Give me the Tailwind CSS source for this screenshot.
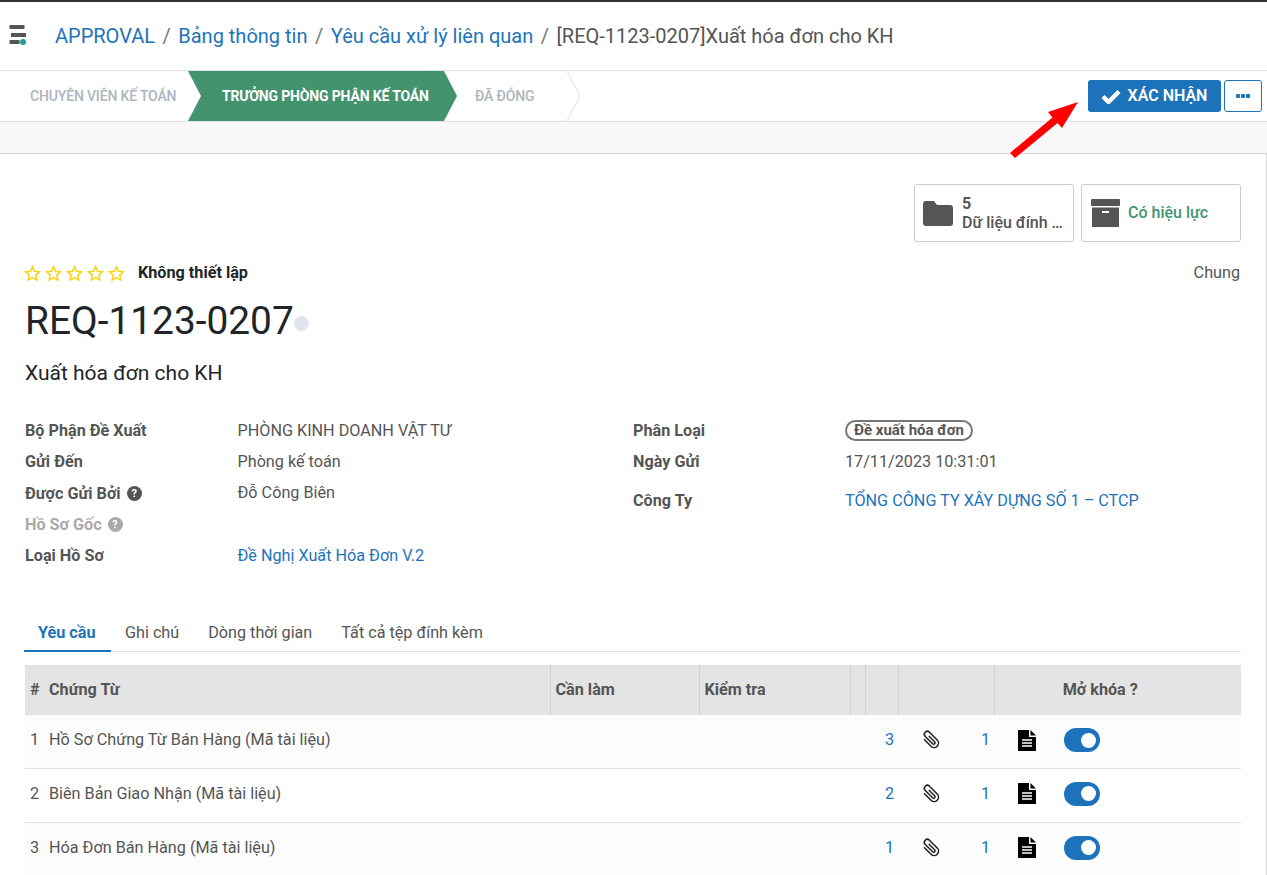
<!doctype html>
<html lang="vi">
<head>
<meta charset="utf-8">
<script src="https://cdn.jsdelivr.net/npm/@tailwindcss/browser@4"></script>
</head>
<body class="font-['Roboto',sans-serif] text-[16.2px] text-[#555] bg-white">
<div class="relative w-[1267px] h-[875px] overflow-hidden">
  <header class="h-[70px] border-t-2 border-[#333] flex items-center bg-white">
    <svg class="ml-[9px] w-[20px] h-[24px] shrink-0 -mt-[2px]" viewBox="0 0 20 24"><rect x="0.5" y="2" width="15" height="4" fill="#555"/><rect x="2" y="10" width="15" height="4" fill="#555"/><rect x="0.5" y="17" width="10" height="4" fill="#555"/><circle cx="14" cy="19" r="3" fill="#1f9e97"/></svg>
    <nav class="ml-[26px] flex items-center text-[20px]">
      <a class="text-[#1d73bb]">APPROVAL</a><span class="mx-[7.5px] text-[#777]">/</span>
      <a class="text-[#1d73bb]">Bảng thông tin</a><span class="mx-[7.5px] text-[#777]">/</span>
      <a class="text-[#1d73bb]">Yêu cầu xử lý liên quan</a><span class="mx-[7.5px] text-[#777]">/</span>
      <span class="text-[#555]">[REQ-1123-0207]Xuất hóa đơn cho KH</span>
    </nav>
  </header>
  <div class="h-[52px] border-y border-[#dee2e6] flex items-center bg-white">
    <div class="w-[188px] h-full flex items-center pl-[30px] text-[14px] font-medium text-[#adb5bd] tracking-[-0.16px] whitespace-nowrap">CHUYÊN VIÊN KẾ TOÁN</div>
    <div class="w-[269px] h-full flex items-center pl-[34px] text-[14px] font-bold text-white bg-[#43936f] tracking-[-0.16px] whitespace-nowrap [clip-path:polygon(0_0,256px_0,269px_50%,256px_100%,0_100%,13px_50%)]">TRƯỞNG PHÒNG PHẬN KẾ TOÁN</div>
    <div class="w-[109px] h-full flex items-center pl-[18px] text-[14px] font-medium text-[#adb5bd] tracking-[-0.16px] whitespace-nowrap">ĐÃ ĐÓNG</div>
    <svg class="w-[15px] h-full shrink-0" viewBox="0 0 15 50" preserveAspectRatio="none"><path d="M1 0 L14 25 L1 50" fill="none" stroke="#dee2e6"/></svg>
    <button class="ml-auto h-[32px] w-[133px] bg-[#1d73bb] text-white rounded-[3px] flex items-center justify-center gap-[7px] text-[16px] font-semibold pr-[1px]">
      <svg class="w-[20px] h-[15px]" viewBox="0 0 20 15"><path d="M2 7.5 L7.5 13 L18 2.5" fill="none" stroke="#fff" stroke-width="4.4"/></svg>XÁC NHẬN</button>
    <button class="ml-[3px] mr-[5px] h-[32px] w-[38px] border border-[#1d73bb] bg-white rounded-[3px] flex items-center justify-center gap-[1px]">
      <span class="w-[4px] h-[4px] bg-[#1d73bb] rounded-[1px]"></span><span class="w-[4px] h-[4px] bg-[#1d73bb] rounded-[1px]"></span><span class="w-[4px] h-[4px] bg-[#1d73bb] rounded-[1px]"></span>
    </button>
  </div>
  <div class="h-[32px] bg-[#f9f9f9] border-b border-[#d8d8d8]"></div>

  <main class="border-r border-[#d8d8d8] h-[722px] pl-[25px] pr-[25px] pt-[30px]">
    <div class="flex justify-end gap-[7px]">
      <div class="w-[160px] h-[58px] border border-[#ccc] rounded-[3px] flex items-center pl-[8px]">
        <svg class="w-[30px] h-[25px] shrink-0" viewBox="0 0 30 25"><path d="M3 0 H11 L14 4 H27 a3 3 0 0 1 3 3 V22 a3 3 0 0 1 -3 3 H3 a3 3 0 0 1 -3 -3 V3 a3 3 0 0 1 3 -3z" fill="#555"/></svg>
        <div class="ml-[9px] leading-[19px] whitespace-nowrap text-[16px]"><div class="font-bold">5</div><div class="font-medium">Dữ liệu đính …</div></div>
      </div>
      <div class="w-[160px] h-[58px] border border-[#ccc] rounded-[3px] flex items-center pl-[9px]">
        <svg class="w-[29px] h-[28px] shrink-0" viewBox="0 0 29 28"><rect width="29" height="7" rx="1" fill="#555"/><path d="M1 8.5 H28 V28 H1z" fill="#555"/><rect x="11" y="12" width="7" height="2" fill="#fff"/></svg>
        <span class="ml-[8px] text-[16px] font-medium text-[#43936f]">Có hiệu lực</span>
      </div>
    </div>

    <div class="flex items-center justify-between mt-[19px] h-[24px] pr-[1px]">
      <div class="flex items-center">
        <div class="flex gap-[4px] -ml-[1px]">
          <svg class="w-[17px] h-[17px]" viewBox="0 0 24 24"><path d="M12 2.5l2.9 6.3 6.9.8-5.1 4.7 1.4 6.8-6.1-3.4-6.1 3.4 1.4-6.8-5.1-4.7 6.9-.8z" fill="none" stroke="#fbd416" stroke-width="2.2"/></svg>
          <svg class="w-[17px] h-[17px]" viewBox="0 0 24 24"><path d="M12 2.5l2.9 6.3 6.9.8-5.1 4.7 1.4 6.8-6.1-3.4-6.1 3.4 1.4-6.8-5.1-4.7 6.9-.8z" fill="none" stroke="#fbd416" stroke-width="2.2"/></svg>
          <svg class="w-[17px] h-[17px]" viewBox="0 0 24 24"><path d="M12 2.5l2.9 6.3 6.9.8-5.1 4.7 1.4 6.8-6.1-3.4-6.1 3.4 1.4-6.8-5.1-4.7 6.9-.8z" fill="none" stroke="#fbd416" stroke-width="2.2"/></svg>
          <svg class="w-[17px] h-[17px]" viewBox="0 0 24 24"><path d="M12 2.5l2.9 6.3 6.9.8-5.1 4.7 1.4 6.8-6.1-3.4-6.1 3.4 1.4-6.8-5.1-4.7 6.9-.8z" fill="none" stroke="#fbd416" stroke-width="2.2"/></svg>
          <svg class="w-[17px] h-[17px]" viewBox="0 0 24 24"><path d="M12 2.5l2.9 6.3 6.9.8-5.1 4.7 1.4 6.8-6.1-3.4-6.1 3.4 1.4-6.8-5.1-4.7 6.9-.8z" fill="none" stroke="#fbd416" stroke-width="2.2"/></svg>
        </div>
        <span class="ml-[13px] font-bold text-[#212529]">Không thiết lập</span>
      </div>
      <span>Chung</span>
    </div>

    <div class="flex items-center h-[44px] mt-[14px]">
      <h1 class="text-[38.85px] leading-[44px] text-[#212529]">REQ-1123-0207</h1>
      <span class="w-[15px] h-[15px] rounded-full bg-[#e1e4ea] mt-[4px]"></span>
    </div>
    <p class="text-[21px] leading-[28px] text-[#212529] mt-[16px]">Xuất hóa đơn cho KH</p>

    <div class="flex mt-[28px]">
      <div class="w-[608px] shrink-0">
        <div class="flex h-[31.4px] items-center"><div class="w-[212.5px] font-bold">Bộ Phận Đề Xuất</div><div>PHÒNG KINH DOANH VẬT TƯ</div></div>
        <div class="flex h-[31.4px] items-center"><div class="w-[212.5px] font-bold">Gửi Đến</div><div>Phòng kế toán</div></div>
        <div class="flex h-[31.4px] items-center pt-[1px]"><div class="w-[212.5px] font-bold flex items-center gap-[6px]">Được Gửi Bởi <span class="w-[15px] h-[15px] rounded-full bg-[#555] text-white text-[11px] leading-[15px] text-center">?</span></div><div class="-mt-[1px]">Đỗ Công Biên</div></div>
        <div class="flex h-[31.4px] items-center"><div class="w-[212.5px] font-bold text-[#aaa] flex items-center gap-[6px]">Hồ Sơ Gốc <span class="w-[15px] h-[15px] rounded-full bg-[#aaa] text-white text-[11px] leading-[15px] text-center">?</span></div></div>
        <div class="flex h-[30.4px] items-center"><div class="w-[212.5px] font-bold">Loại Hồ Sơ</div><div class="text-[#1d73bb]">Đề Nghị Xuất Hóa Đơn V.2</div></div>
      </div>
      <div>
        <div class="flex h-[31.3px] items-center"><div class="w-[212px] font-bold">Phân Loại</div><span class="border-2 border-[#777] rounded-full px-[7px] h-[21px] flex items-center text-[15px] font-bold">Đề xuất hóa đơn</span></div>
        <div class="flex h-[31.3px] items-center"><div class="w-[212px] font-bold">Ngày Gửi</div><div>17/11/2023 10:31:01</div></div>
        <div class="flex h-[48px] items-center"><div class="w-[212px] font-bold">Công Ty</div><div class="text-[#1d73bb]">TỔNG CÔNG TY XÂY DỰNG SỐ 1 – CTCP</div></div>
      </div>
    </div>

    <div class="mt-[43.5px] h-[38px] border-b border-[#dee2e6] flex items-stretch whitespace-nowrap -ml-[1px]">
      <div class="w-[87px] pl-[14px] pt-[1px] flex items-center border-b-2 border-[#1d73bb] -mb-[1px] font-bold text-[#1d73bb]">Yêu cầu</div>
      <div class="px-[14px] flex items-center">Ghi chú</div>
      <div class="px-[15px] flex items-center">Dòng thời gian</div>
      <div class="px-[14px] flex items-center">Tất cả tệp đính kèm</div>
    </div>

    <table class="mt-[13px] w-[1216px] table-fixed border-collapse">
      <colgroup><col class="w-[18px]"><col class="w-[507px]"><col class="w-[149px]"><col class="w-[151px]"><col class="w-[15px]"><col class="w-[33px]"><col class="w-[96px]"><col class="w-[247px]"></colgroup>
      <thead>
        <tr class="h-[50px] bg-[#e4e4e4] font-bold text-left">
          <th class="pl-[5px] font-bold">#</th>
          <th class="pl-[6px] font-bold border-r border-[#d2d2d2]">Chứng Từ</th>
          <th class="pl-[5px] font-bold border-r border-[#d2d2d2]">Cần làm</th>
          <th class="pl-[5px] font-bold border-r border-[#d2d2d2]">Kiểm tra</th>
          <th class="border-r border-[#d2d2d2]"></th>
          <th class="border-r border-[#d2d2d2]"></th>
          <th class="border-r border-[#d2d2d2]"></th>
          <th class="font-bold text-center pr-[35px]">Mở khóa ?</th>
        </tr>
      </thead>
      <tbody>
        <tr class="h-[53px] bg-[#fcfcfc] border-b border-[#dee2e6] [&>td]:pb-[3px]">
          <td class="pl-[5px]">1</td><td class="pl-[6px]">Hồ Sơ Chứng Từ Bán Hàng (Mã tài liệu)</td><td></td><td></td><td></td>
          <td class="text-right pr-[4px] text-[#1d73bb]">3</td>
          <td class="pr-[4px]"><div class="flex items-center justify-between pl-[22px]"><svg class="w-[22px] h-[22px]" viewBox="0 0 20 20"><path d="M6 5 V14 a4 4 0 0 0 8 0 V4 a2.7 2.7 0 0 0 -5.4 0 V13.5 a1.3 1.3 0 0 0 2.6 0 V6" fill="none" stroke="#222" stroke-width="1.4" transform="rotate(-45 10 10)"/></svg><span class="text-[#1d73bb]">1</span></div></td>
          <td><div class="flex items-center pl-[23px]"><svg class="w-[20px] h-[21px]" viewBox="0 0 20 21"><path d="M1 0 H12 V7 H19 V21 H1z M13.5 0 L19 5.5 H13.5z" fill="#000"/><path d="M5 10h10M5 13h10M5 16h10" stroke="#fff" stroke-width="1.4"/></svg><span class="ml-[27px] w-[36px] h-[24px] rounded-full bg-[#1d73bb] flex items-center justify-end pr-[4px]"><span class="w-[15px] h-[15px] rounded-full bg-white"></span></span></div></td>
        </tr>
        <tr class="h-[54px] bg-white border-b border-[#dee2e6] [&>td]:pb-[3px]">
          <td class="pl-[5px]">2</td><td class="pl-[6px]">Biên Bản Giao Nhận (Mã tài liệu)</td><td></td><td></td><td></td>
          <td class="text-right pr-[4px] text-[#1d73bb]">2</td>
          <td class="pr-[4px]"><div class="flex items-center justify-between pl-[22px]"><svg class="w-[22px] h-[22px]" viewBox="0 0 20 20"><path d="M6 5 V14 a4 4 0 0 0 8 0 V4 a2.7 2.7 0 0 0 -5.4 0 V13.5 a1.3 1.3 0 0 0 2.6 0 V6" fill="none" stroke="#222" stroke-width="1.4" transform="rotate(-45 10 10)"/></svg><span class="text-[#1d73bb]">1</span></div></td>
          <td><div class="flex items-center pl-[23px]"><svg class="w-[20px] h-[21px]" viewBox="0 0 20 21"><path d="M1 0 H12 V7 H19 V21 H1z M13.5 0 L19 5.5 H13.5z" fill="#000"/><path d="M5 10h10M5 13h10M5 16h10" stroke="#fff" stroke-width="1.4"/></svg><span class="ml-[27px] w-[36px] h-[24px] rounded-full bg-[#1d73bb] flex items-center justify-end pr-[4px]"><span class="w-[15px] h-[15px] rounded-full bg-white"></span></span></div></td>
        </tr>
        <tr class="h-[54px] bg-[#fcfcfc] [&>td]:pb-[4px]">
          <td class="pl-[5px]">3</td><td class="pl-[6px]">Hóa Đơn Bán Hàng (Mã tài liệu)</td><td></td><td></td><td></td>
          <td class="text-right pr-[4px] text-[#1d73bb]">1</td>
          <td class="pr-[4px]"><div class="flex items-center justify-between pl-[22px]"><svg class="w-[22px] h-[22px]" viewBox="0 0 20 20"><path d="M6 5 V14 a4 4 0 0 0 8 0 V4 a2.7 2.7 0 0 0 -5.4 0 V13.5 a1.3 1.3 0 0 0 2.6 0 V6" fill="none" stroke="#222" stroke-width="1.4" transform="rotate(-45 10 10)"/></svg><span class="text-[#1d73bb]">1</span></div></td>
          <td><div class="flex items-center pl-[23px]"><svg class="w-[20px] h-[21px]" viewBox="0 0 20 21"><path d="M1 0 H12 V7 H19 V21 H1z M13.5 0 L19 5.5 H13.5z" fill="#000"/><path d="M5 10h10M5 13h10M5 16h10" stroke="#fff" stroke-width="1.4"/></svg><span class="ml-[27px] w-[36px] h-[24px] rounded-full bg-[#1d73bb] flex items-center justify-end pr-[4px]"><span class="w-[15px] h-[15px] rounded-full bg-white"></span></span></div></td>
        </tr>
      </tbody>
    </table>
  </main>
  <svg class="absolute left-0 top-0 w-[1267px] h-[875px] pointer-events-none" viewBox="0 0 1267 875"><polygon points="1010,153 1015,158 1057.5,123 1062,128 1078,102 1048,112 1052.5,117.5" fill="#f00"/></svg>
</div>
</body>
</html>
